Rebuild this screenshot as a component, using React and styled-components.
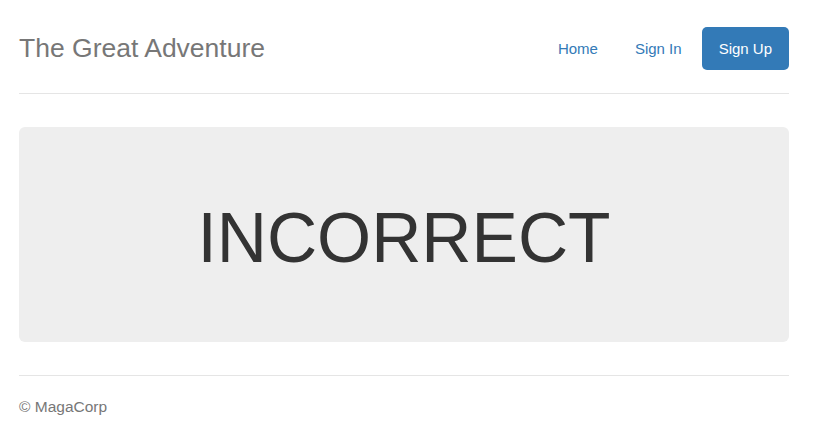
import React from "react";
import styled, { createGlobalStyle } from "styled-components";

const GlobalStyle = createGlobalStyle`
  body {
    margin: 0;
    background: #fff;
    font-family: "Liberation Sans", Arial, sans-serif;
    color: #333;
  }
`;

const Page = styled.div`
  width: 770px;
  margin-left: 19px;
`;

const Header = styled.header`
  display: flex;
  justify-content: space-between;
  align-items: center;
  padding: 27px 0 23px;
  border-bottom: 1px solid #e5e5e5;
`;

const Title = styled.h3`
  margin: 0;
  font-size: 26.5px;
  font-weight: 400;
  line-height: 43px;
  color: #777;
`;

const Nav = styled.nav`
  display: flex;
  gap: 3px;
`;

const NavLink = styled.a`
  display: block;
  height: 43px;
  line-height: 43px;
  padding: 0 17px;
  border-radius: 5px;
  font-size: 15px;
  text-decoration: none;
  color: ${(p) => (p.active ? "#fff" : "#337ab7")};
  background: ${(p) => (p.active ? "#337ab7" : "transparent")};
`;

const Jumbotron = styled.section`
  margin-top: 33px;
  height: 215px;
  display: flex;
  align-items: center;
  justify-content: center;
  background: #eee;
  border-radius: 6px;
`;

const BigText = styled.h1`
  margin: 0;
  font-size: 69.5px;
  font-weight: 400;
  color: #333;
  line-height: 1;
  padding-top: 9px;
`;

const Footer = styled.footer`
  margin-top: 33px;
  padding-top: 21px;
  border-top: 1px solid #e5e5e5;
  font-size: 15.5px;
  line-height: 20px;
  color: #777;
`;

export default function App() {
  return (
    <>
      <GlobalStyle />
      <Page>
        <Header>
          <Title>The Great Adventure</Title>
          <Nav>
            <NavLink href="#">Home</NavLink>
            <NavLink href="#">Sign In</NavLink>
            <NavLink href="#" active>
              Sign Up
            </NavLink>
          </Nav>
        </Header>
        <Jumbotron>
          <BigText>INCORRECT</BigText>
        </Jumbotron>
        <Footer>© MagaCorp</Footer>
      </Page>
    </>
  );
}
